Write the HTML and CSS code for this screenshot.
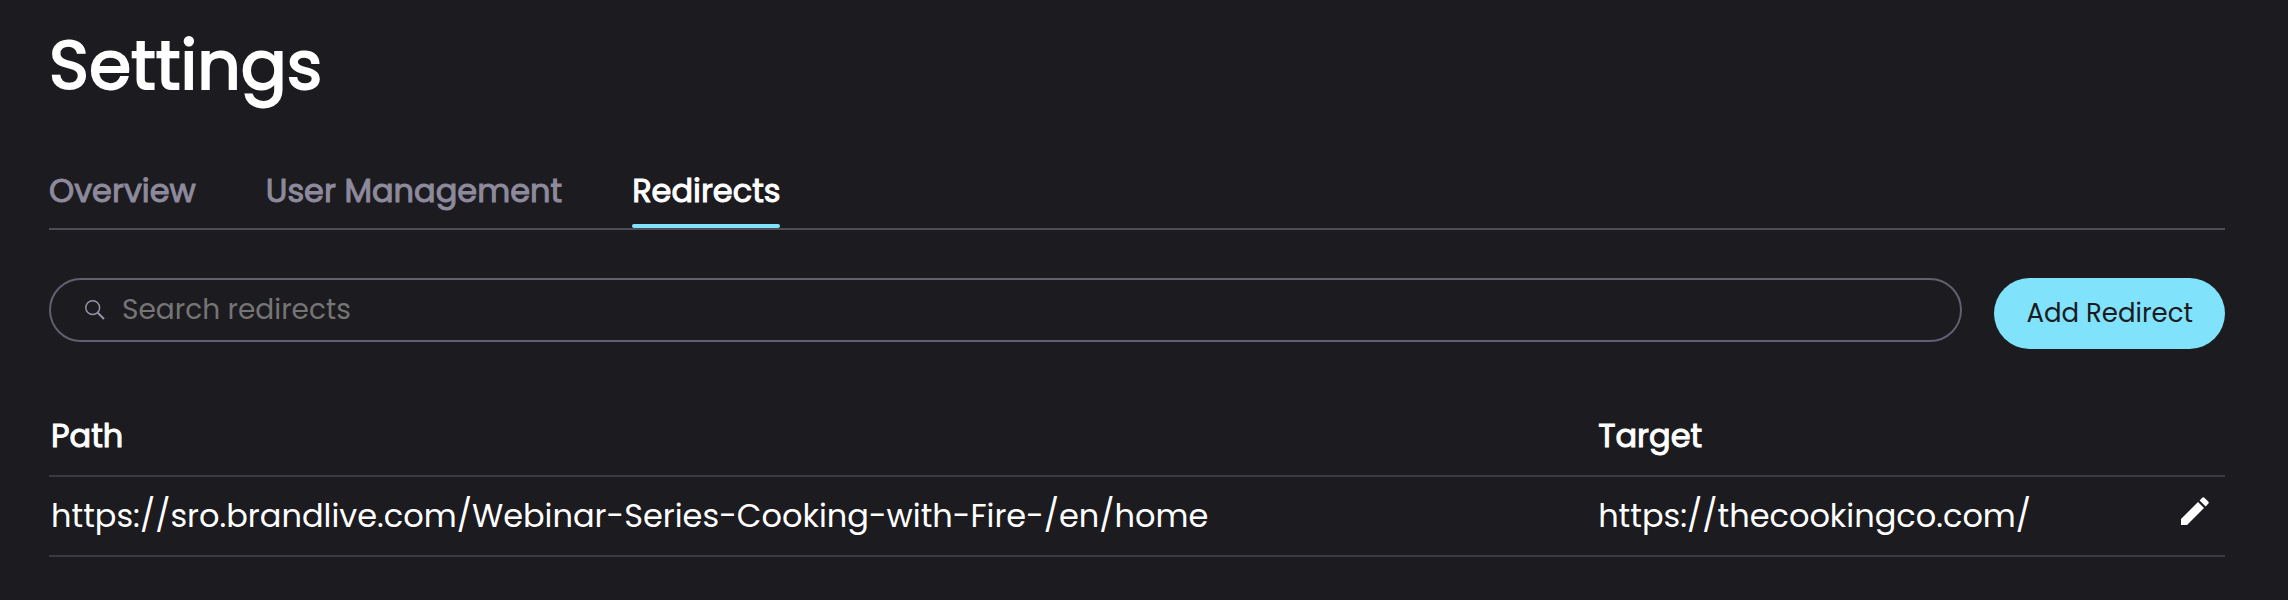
FILE: index.html
```html
<!DOCTYPE html>
<html lang="en">
<head>
<meta charset="utf-8">
<meta name="viewport" content="width=device-width, initial-scale=1">
<title>Settings</title>
<link rel="stylesheet" href="styles.css">
</head>
<body>
<main class="settings">
  <h1 class="title">Settings</h1>
  <nav class="tabs" aria-label="Settings sections">
    <a class="tab" href="#overview">Overview</a>
    <a class="tab" href="#users">User Management</a>
    <a class="tab tab-active" href="#redirects" aria-current="page">Redirects</a>
  </nav>
  <div class="toolbar">
    <label class="search">
      <svg class="search-icon" viewBox="0 0 20 20" aria-hidden="true"><circle cx="7.7" cy="7.7" r="6.9"/><path d="M12.8 12.8 19 19" class="handle"/></svg>
      <input class="search-input" type="search" placeholder="Search redirects" aria-label="Search redirects">
    </label>
    <button class="add" type="button">Add Redirect</button>
  </div>
  <table class="redirects">
    <colgroup><col class="col-path"><col class="col-target"><col></colgroup>
    <thead>
      <tr><th scope="col">Path</th><th scope="col">Target</th><th></th></tr>
    </thead>
    <tbody>
      <tr>
        <td>https://sro.brandlive.com/Webinar-Series-Cooking-with-Fire-/en/home</td>
        <td>https://thecookingco.com/</td>
        <td class="actions"><button class="edit" type="button" aria-label="Edit redirect"><svg class="edit-icon" viewBox="0 0 28 28" aria-hidden="true"><path d="M0 22 17 5 23 11 6 28H0Z"/><path d="M18.6 3.4 21.2.8Q22.3-.3 23.4.8L27.2 4.6Q28.3 5.7 27.2 6.8L24.6 9.4Z"/></svg></button></td>
      </tr>
    </tbody>
  </table>
</main>
</body>
</html>
```
FILE: styles.css
```css
* { box-sizing: border-box; }

body {
  margin: 0;
  background: #1c1b1f;
  color: #fff;
  font-family: Poppins, Inter, sans-serif;
  font-size: 32px;
  line-height: 48px;
}

.settings { padding: 16px 63px 0 49px; }

.title {
  margin: 0;
  font-size: 68px;
  font-weight: 400;
  line-height: 100px;
  -webkit-text-stroke: 2px currentColor;
}

.tabs {
  display: flex;
  gap: 70px;
  margin-top: 51px;
  border-bottom: 2px solid #4e4c56;
}

.tab {
  height: 61px;
  color: #8e8a9d;
  font-weight: 400;
  text-decoration: none;
  -webkit-text-stroke: 1px currentColor;
}

.tab-active {
  position: relative;
  color: #fff;
}

.tab-active::after {
  content: "";
  position: absolute;
  inset: auto 0 0;
  height: 4px;
  border-radius: 2px;
  background: #80e2fb;
}

.toolbar {
  display: flex;
  align-items: flex-start;
  gap: 32px;
  margin-top: 48px;
}

.search {
  display: flex;
  flex: 1;
  align-items: center;
  gap: 17px;
  height: 64px;
  padding: 0 34px;
  border: 2px solid #625f71;
  border-radius: 32px;
}

.search-icon {
  width: 20px;
  height: 20px;
  fill: none;
  stroke: #9591a6;
  stroke-width: 1.5;
}

.handle { stroke-width: 2; }

.search-input {
  flex: 1;
  padding: 0;
  border: 0;
  outline: 0;
  background: none;
  color: #fff;
  font: inherit;
  font-size: 28px;
}

.search-input::placeholder { color: #757575; }

.add {
  padding: 0 32px;
  border: 0;
  border-radius: 36px;
  background: #80e2fb;
  color: #1c1b1f;
  font: inherit;
  font-size: 26px;
  line-height: 71px;
}

.redirects {
  width: 100%;
  margin-top: 47px;
  border-collapse: collapse;
  table-layout: fixed;
}

.col-path { width: 71.1%; }
.col-target { width: 24%; }

.redirects th,
.redirects td {
  height: 80px;
  padding: 0 2px;
  border-bottom: 2px solid #3b3a40;
  text-align: left;
}

.redirects th {
  font-weight: 400;
  -webkit-text-stroke: 1px currentColor;
}

.edit {
  display: block;
  margin-left: auto;
  padding: 0 14px 10px;
  border: 0;
  background: none;
  line-height: 0;
}

.edit-icon {
  width: 28px;
  height: 28px;
  fill: #fff;
}
```
